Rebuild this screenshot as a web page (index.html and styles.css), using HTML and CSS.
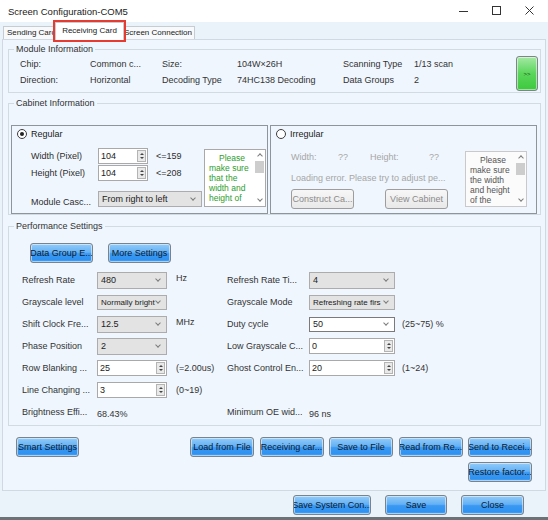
FILE: index.html
```html
<!DOCTYPE html>
<html lang="en">
<head>
    <meta charset="UTF-8">
    <title>Screen Configuration-COM5</title>
    <link rel="stylesheet" href="styles.css">
</head>
<body>
<div class="window">
    <div class="titlebar">
        <span class="title">Screen Configuration-COM5</span>
        <div class="winctl">
            <span><svg width="10" height="10"><path d="M0 5.5h9" stroke="#333" stroke-width="1"/></svg></span>
            <span><svg width="10" height="10"><rect x="0.5" y="0.5" width="8" height="8" fill="none" stroke="#333"/></svg></span>
            <span><svg width="10" height="10"><path d="M0.5 0.5L8.5 8.5M8.5 0.5L0.5 8.5" stroke="#333"/></svg></span>
        </div>
    </div>

    <div class="tabs">
        <div class="tab tab-send">Sending Card</div>
        <div class="tab tab-active">Receiving Card</div>
        <div class="tab tab-screen">Screen Connection</div>
    </div>

    <div class="panel">
        <fieldset class="group module">
            <legend>Module Information</legend>
            <div class="module-body">
                <div class="info">
                    <span>Chip:</span><span>Common c...</span>
                    <span>Size:</span><span>104W×26H</span>
                    <span>Scanning Type</span><span>1/13 scan</span>
                    <span>Direction:</span><span>Horizontal</span>
                    <span>Decoding Type</span><span>74HC138 Decoding</span>
                    <span>Data Groups</span><span>2</span>
                </div>
                <div class="go">&gt;&gt;</div>
            </div>
        </fieldset>

        <fieldset class="group cabinet">
            <legend>Cabinet Information</legend>
            <div class="cabinet-body">
                <div class="cab cab-reg">
                    <div class="cab-head"><span class="radio on"></span>Regular</div>
                    <div class="cab-body reg-body">
                        <div class="reg-fields">
                            <span>Width (Pixel)</span>
                            <div class="spin w50"><span class="val">104</span><span class="arrows"><i class="up"></i><i class="down"></i></span></div>
                            <span>&lt;=159</span>
                            <span>Height (Pixel)</span>
                            <div class="spin w50"><span class="val">104</span><span class="arrows"><i class="up"></i><i class="down"></i></span></div>
                            <span>&lt;=208</span>
                            <span class="low">Module Casc...</span>
                            <div class="sel w104 low wide"><span class="val">From right to left</span><span class="chev"></span></div>
                        </div>
                        <div class="note">
                            <p class="green">Please make sure that the width and height of</p>
                            <div class="vbar"><span class="chev chev-up"></span><span class="thumb"></span><span class="chev chev-dn"></span></div>
                        </div>
                    </div>
                </div>
                <div class="cab cab-irr">
                    <div class="cab-head"><span class="radio"></span>Irregular</div>
                    <div class="cab-body irr-body">
                        <div class="irr-fields">
                            <div class="irr-size"><span>Width:</span><span>??</span><span>Height:</span><span>??</span></div>
                            <div class="irr-err">Loading error. Please try to adjust pe...</div>
                            <div class="irr-btns">
                                <button class="btn btn-off w63">Construct Ca...</button>
                                <button class="btn btn-off w63">View Cabinet</button>
                            </div>
                        </div>
                        <div class="note note-gray">
                            <p>Please make sure the width and height of the</p>
                            <div class="vbar"><span class="chev chev-up"></span><span class="thumb"></span><span class="chev chev-dn"></span></div>
                        </div>
                    </div>
                </div>
            </div>
        </fieldset>

        <fieldset class="group perf">
            <legend>Performance Settings</legend>
            <div class="perf-body">
                <div class="perf-btns">
                    <button class="btn w63">Data Group E...</button>
                    <button class="btn w63">More Settings</button>
                </div>
                <div class="params">
                    <span>Refresh Rate</span>
                    <div class="sel w70"><span class="val">480</span><span class="chev"></span></div>
                    <span class="unit">Hz</span>
                    <span>Refresh Rate Ti...</span>
                    <div class="sel w86"><span class="val">4</span><span class="chev"></span></div>
                    <span></span>

                    <span>Grayscale level</span>
                    <div class="sel w70 small"><span class="val">Normally bright</span><span class="chev"></span></div>
                    <span></span>
                    <span>Grayscale Mode</span>
                    <div class="sel w86 small"><span class="val">Refreshing rate firs</span><span class="chev"></span></div>
                    <span></span>

                    <span>Shift Clock Fre...</span>
                    <div class="sel w70"><span class="val">12.5</span><span class="chev"></span></div>
                    <span class="unit">MHz</span>
                    <span>Duty cycle</span>
                    <div class="sel combo w86"><span class="val">50</span><span class="chev"></span></div>
                    <span>(25~75) %</span>

                    <span>Phase Position</span>
                    <div class="sel w70"><span class="val">2</span><span class="chev"></span></div>
                    <span></span>
                    <span>Low Grayscale C...</span>
                    <div class="spin w86"><span class="val">0</span><span class="arrows"><i class="up"></i><i class="down"></i></span></div>
                    <span></span>

                    <span>Row Blanking ...</span>
                    <div class="spin w70"><span class="val">25</span><span class="arrows"><i class="up"></i><i class="down"></i></span></div>
                    <span>(=2.00us)</span>
                    <span>Ghost Control En...</span>
                    <div class="spin w86"><span class="val">20</span><span class="arrows"><i class="up"></i><i class="down"></i></span></div>
                    <span>(1~24)</span>

                    <span>Line Changing ...</span>
                    <div class="spin w70"><span class="val">3</span><span class="arrows"><i class="up"></i><i class="down"></i></span></div>
                    <span>(0~19)</span>
                    <span></span><span></span><span></span>

                    <span>Brightness Effi...</span>
                    <span class="readout">68.43%</span>
                    <span></span>
                    <span>Minimum OE wid...</span>
                    <span class="readout">96 ns</span>
                    <span></span>
                </div>
            </div>
        </fieldset>

        <div class="actions">
            <button class="btn w63">Smart Settings</button>
            <div class="actions-right">
                <div class="btn-row">
                    <button class="btn w64">Load from File</button>
                    <button class="btn w64">Receiving car...</button>
                    <button class="btn w64">Save to File</button>
                    <button class="btn w64">Read from Re...</button>
                    <button class="btn w64">Send to Recei...</button>
                </div>
                <button class="btn w64">Restore factor...</button>
            </div>
        </div>
    </div>

    <div class="footer">
        <button class="btn w78">Save System Con...</button>
        <button class="btn w62">Save</button>
        <button class="btn w63">Close</button>
    </div>
</div>
</body>
</html>
```

FILE: styles.css
```css
* {
    box-sizing: border-box;
}
body {
    margin: 0;
    font-family: "Liberation Sans", Arial, sans-serif;
    font-size: 9px;
    color: #2e2e2e;
}
.window {
    width: 548px;
    height: 520px;
    background: #eaf2fa;
    display: flex;
    flex-direction: column;
    overflow: hidden;
}

/* title bar */
.titlebar {
    height: 22px;
    flex: none;
    background: #fff;
    display: flex;
    align-items: center;
    padding-left: 8px;
}
.title {
    flex: 1;
    font-size: 9.5px;
    color: #222;
}
.winctl {
    display: flex;
    margin-right: 2px;
}
.winctl span {
    width: 33px;
    height: 22px;
    display: flex;
    align-items: center;
    justify-content: center;
}

/* tabs */
.tabs {
    height: 17px;
    flex: none;
    display: flex;
    align-items: flex-end;
    padding-left: 3px;
    font-size: 8px;
}
.tab {
    height: 13px;
    line-height: 12px;
    border: 1px solid #c5ccd2;
    border-bottom: none;
    background: #f7f9fb;
    text-align: center;
    color: #222;
    white-space: nowrap;
}
.tab-send {
    width: 54px;
    text-align: left;
    padding-left: 3px;
}
.tab-active {
    width: 69px;
    height: 18px;
    line-height: 15px;
    margin: 0 -2px -1px;
    background: #fff;
    position: relative;
    z-index: 1;
    outline: 2px solid #e53b30;
    outline-offset: 0;
}
.tab-screen {
    width: 73px;
    text-align: right;
    padding-right: 2px;
}

/* main panel */
.panel {
    height: 452px;
    flex: none;
    margin: 0 2px;
    border: 1px solid #d0d9e1;
    background: #eff6fe;
    padding: 3px 4px 8px 5px;
    display: flex;
    flex-direction: column;
}
.group {
    margin: 0;
    padding: 0;
    min-width: 0;
    border: 1px solid #d3dbe2;
}
.group legend {
    margin-left: 5px;
    padding: 0 2px;
    line-height: 12px;
    color: #333;
}
.cabinet {
    margin-top: 4px;
}
.perf {
    margin-top: 5px;
}

/* module information */
.module-body {
    display: flex;
    align-items: flex-start;
    padding: 1px 2px 1px 11px;
}
.info {
    flex: 1;
    display: grid;
    grid-template-columns: 70px 72px 75px 106px 71px auto;
    grid-auto-rows: 16px;
    align-items: center;
    color: #333;
}
.go {
    width: 22px;
    height: 35px;
    border: 1px solid #7d858b;
    border-radius: 3px;
    background: linear-gradient(#a4e9a4, #5ad65a 50%, #3ec93e);
    box-shadow: inset 0 0 0 1px rgba(255, 255, 255, 0.5);
    display: flex;
    align-items: center;
    justify-content: center;
    font-size: 6px;
    color: #1d4a1d;
}

/* cabinet information */
.cabinet-body {
    display: flex;
    gap: 2px;
    padding: 16px 2px 0;
}
.cab {
    height: 89px;
    border: 1px solid #8e959b;
    padding: 2px 0 0 5px;
}
.cab-reg {
    width: 257px;
}
.cab-irr {
    width: 267px;
}
.cab-head {
    height: 12px;
    display: flex;
    align-items: center;
    gap: 4px;
    color: #222;
}
.radio {
    width: 10px;
    height: 10px;
    border: 1px solid #3c3c3c;
    border-radius: 50%;
    background: #fff;
    display: flex;
    align-items: center;
    justify-content: center;
}
.radio.on::after {
    content: "";
    width: 4px;
    height: 4px;
    border-radius: 50%;
    background: #222;
}
.cab-body {
    display: flex;
    align-items: flex-start;
}
.reg-body {
    margin-top: 9px;
}
.reg-fields {
    display: grid;
    grid-template-columns: 67px 58px auto;
    grid-template-rows: 14px 14px 24px;
    row-gap: 3px;
    align-items: center;
    padding-left: 14px;
}
.reg-fields .low {
    align-self: end;
}
.reg-fields .low:first-of-type {
    margin-bottom: 2px;
}
.note {
    width: 62px;
    height: 58px;
    margin-left: auto;
    margin-right: 1px;
    border: 1px solid #a9a9a9;
    background: #fff;
    display: flex;
}
.note p {
    flex: 1;
    margin: 0;
    padding: 3px 1px 0 4px;
    font-size: 8.5px;
    line-height: 10px;
    text-indent: 10px;
    overflow: hidden;
    color: #555;
}
.note p.green {
    color: #2c9e2c;
}
.note-gray {
    height: 56px;
    margin-right: 9px;
    border-color: #c9c9c9;
    background: #fbfbfb;
}
.vbar {
    width: 11px;
    display: flex;
    flex-direction: column;
    align-items: center;
    padding: 4px 0 5px;
}
.vbar .thumb {
    width: 9px;
    height: 12px;
    margin-top: 3px;
    background: #cdcdcd;
}
.vbar .chev-dn {
    margin-top: auto;
}
.chev {
    width: 4px;
    height: 4px;
    border-right: 1px solid #7c7c7c;
    border-bottom: 1px solid #7c7c7c;
    transform: rotate(45deg);
    margin-top: -2px;
    flex: none;
}
.chev-up {
    transform: rotate(225deg);
    margin-top: 0;
}
.irr-body {
    margin-top: 11px;
}
.irr-fields {
    padding-left: 15px;
    color: #a6a6a6;
}
.irr-size {
    height: 12px;
    display: grid;
    grid-template-columns: 47px 32px 59px auto;
    align-items: center;
}
.irr-err {
    height: 12px;
    line-height: 12px;
    margin-top: 9px;
}
.irr-btns {
    display: flex;
    gap: 31px;
    margin-top: 5px;
}

/* inputs */
.sel {
    height: 17px;
    display: flex;
    align-items: center;
    border: 1px solid #acacac;
    background: #e3e3e3;
    padding: 0 6px 0 3px;
    color: #222;
}
.sel.wide {
    height: 16px;
}
.sel .val {
    flex: 1;
    white-space: nowrap;
    overflow: hidden;
}
.sel.small {
    height: 15px;
    font-size: 8px;
}
.combo {
    background: #fff;
    border-color: #7a7a7a;
    height: 15px;
}
.spin {
    height: 16px;
    display: flex;
    align-items: center;
    border: 1px solid #a9a9a9;
    background: #fff;
    padding: 0 1px 0 2px;
    color: #222;
}
.spin .val {
    flex: 1;
}
.arrows {
    width: 9px;
    height: 12px;
    border: 1px solid #b4b4b4;
    background: #e9e9e9;
    display: flex;
    flex-direction: column;
    align-items: center;
    justify-content: center;
    gap: 2px;
}
.arrows i {
    width: 0;
    height: 0;
    border-left: 2px solid transparent;
    border-right: 2px solid transparent;
}
.arrows .up {
    border-bottom: 2px solid #444;
}
.arrows .down {
    border-top: 2px solid #444;
}
.w50 { width: 50px; }
.w62 { width: 62px; }
.w63 { width: 63px; }
.w64 { width: 64px; }
.w70 { width: 70px; }
.w78 { width: 78px; }
.w86 { width: 86px; }
.w104 { width: 104px; }

/* performance settings */
.perf-body {
    padding: 11px 0 2px;
}
.perf-btns {
    display: flex;
    gap: 15px;
    padding-left: 21px;
}
.params {
    margin: 6px 0 0 13px;
    display: grid;
    grid-template-columns: 75px 79px 51px 82px 93px auto;
    grid-auto-rows: 22px;
    align-items: center;
    color: #333;
}
.params .unit {
    margin-top: -5px;
}
.params .readout {
    margin-top: 3px;
}

/* buttons */
.btn {
    height: 20px;
    padding: 0;
    border: 1px solid #7b8288;
    border-radius: 3px;
    background: linear-gradient(#93cbf9, #63b1f6 46%, #3a98f1 54%, #2f92f1 88%, #5aabf5);
    box-shadow: inset 0 0 0 1px rgba(255, 255, 255, 0.5);
    font-family: inherit;
    font-size: 9px;
    color: #0c1a30;
    white-space: nowrap;
    overflow: hidden;
    display: flex;
    align-items: center;
    justify-content: center;
    flex: none;
}
.btn-off {
    background: linear-gradient(#f7f7f7, #e8e8e8);
    border-color: #9d9d9d;
    box-shadow: none;
    color: #8b8b8b;
}
.actions {
    display: flex;
    justify-content: space-between;
    align-items: flex-start;
    margin-top: 11px;
    padding: 0 9px 0 8px;
}
.actions-right {
    display: flex;
    flex-direction: column;
    align-items: flex-end;
    gap: 5px;
}
.btn-row {
    display: flex;
    gap: 5.5px;
}

/* footer */
.footer {
    height: 29px;
    flex: none;
    display: flex;
    justify-content: flex-end;
    align-items: flex-end;
    gap: 14px;
    padding: 0 24px 2px 0;
    border-bottom: 3px solid #6d7277;
}
```
